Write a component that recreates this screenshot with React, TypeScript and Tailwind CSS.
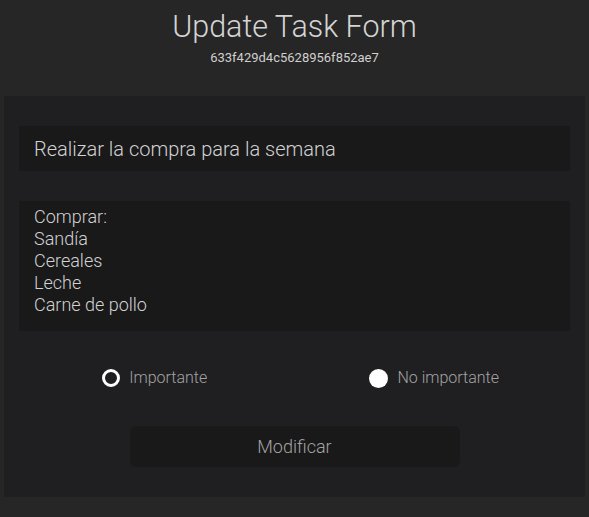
import React from "react";

const App: React.FC = () => {
  return (
    <div className="min-h-[517px] bg-[#262626] font-['Roboto',sans-serif] font-light">
      {/* Header */}
      <div className="h-[96px] flex flex-col items-center pt-[8px]">
        <h1 className="text-[30.5px] leading-[38px] text-[#d4d4d4]">Update Task Form</h1>
        <p className="mt-[4px] text-[13px] leading-[16px] font-normal text-[#cfcfcf]">
          633f429d4c5628956f852ae7
        </p>
      </div>

      {/* Form */}
      <form className="mx-1 bg-[#1f1f21] px-[15px] pt-[30px] pb-[30px]">
        <input
          type="text"
          defaultValue="Realizar la compra para la semana"
          className="w-full h-[45px] bg-[#19191a] px-[15px] text-[20px] font-light text-[#d2d2d2] outline-none"
        />
        <textarea
          defaultValue={"Comprar:\nSandía\nCereales\nLeche\nCarne de pollo"}
          className="mt-[30px] block w-full h-[130px] resize-none bg-[#19191a] px-[15px] pt-[5px] text-[18px] leading-[22px] font-light text-[#d2d2d2] outline-none"
        />

        <div className="mt-[35px] -mx-[4px] grid grid-cols-2 justify-items-center">
          <label className="flex items-center gap-[9px]">
            <span className="w-[18px] h-[18px] rounded-full border-[3px] border-white bg-[#1f1f21]" />
            <span className="text-[16px] text-[#a3a3a3]">Importante</span>
          </label>
          <label className="flex items-center gap-[9px]">
            <span className="w-[19px] h-[19px] rounded-full bg-white" />
            <span className="text-[16px] text-[#a3a3a3]">No importante</span>
          </label>
        </div>

        <button
          type="button"
          className="mt-[36px] mx-auto block w-[330px] h-[41px] rounded-md bg-[#19191a] text-[18px] font-light text-[#a3a3a3]"
        >
          Modificar
        </button>
      </form>
    </div>
  );
};

export default App;
